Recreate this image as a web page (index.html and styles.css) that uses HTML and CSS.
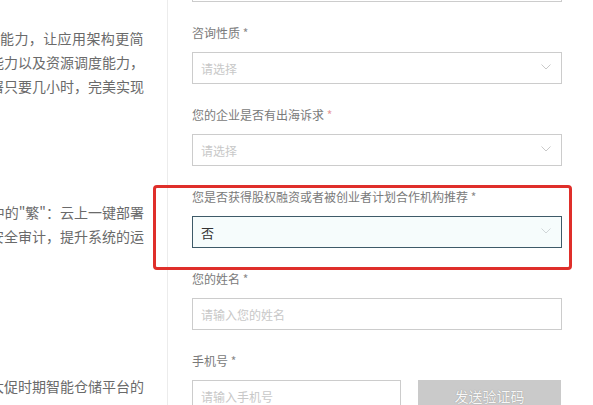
FILE: index.html
```html
<!DOCTYPE html>
<html lang="zh-CN">
<head>
<meta charset="utf-8">
<title>表单</title>
<link rel="stylesheet" href="styles.css">
</head>
<body>
<div class="page">
  <aside class="intro">
    <div class="block b1">
      <div class="line wide"><span>的能力，让应用架构更简</span></div>
      <div class="line"><span>调度能力以及资源调度能力，</span></div>
      <div class="line"><span>部署只要几小时，完美实现</span></div>
    </div>
    <div class="block b2">
      <div class="line"><span>杂中的"繁"：云上一键部署</span></div>
      <div class="line"><span>安全审计，提升系统的运</span></div>
    </div>
    <div class="block b3">
      <div class="line"><span>大促时期智能仓储平台的</span></div>
    </div>
  </aside>

  <main class="form">
    <div class="field first">
      <div class="control"></div>
    </div>

    <div class="field">
      <label class="label">咨询性质 <span class="req plain">*</span></label>
      <div class="control placeholder">
        <span>请选择</span>
        <svg class="chev" width="10" height="6" viewBox="0 0 10 6"><polyline points="0.5,0.5 5,5 9.5,0.5" fill="none" stroke="#c9c9c9" stroke-width="1"/></svg>
      </div>
    </div>

    <div class="field">
      <label class="label">您的企业是否有出海诉求 <span class="req">*</span></label>
      <div class="control placeholder">
        <span>请选择</span>
        <svg class="chev" width="10" height="6" viewBox="0 0 10 6"><polyline points="0.5,0.5 5,5 9.5,0.5" fill="none" stroke="#c9c9c9" stroke-width="1"/></svg>
      </div>
    </div>

    <div class="field marked">
      <label class="label">您是否获得股权融资或者被创业者计划合作机构推荐 <span class="req plain">*</span></label>
      <div class="control focused">
        <span>否</span>
        <svg class="chev" width="10" height="6" viewBox="0 0 10 6"><polyline points="0.5,0.5 5,5 9.5,0.5" fill="none" stroke="#d0d6d8" stroke-width="1"/></svg>
      </div>
      <div class="highlight"></div>
    </div>

    <div class="field">
      <label class="label">您的姓名 <span class="req plain">*</span></label>
      <div class="control placeholder"><span>请输入您的姓名</span></div>
    </div>

    <div class="field">
      <label class="label">手机号 <span class="req plain">*</span></label>
      <div class="phone-row">
        <div class="control placeholder phone"><span>请输入手机号</span></div>
        <button class="code-btn" type="button">发送验证码</button>
      </div>
    </div>
  </main>
</div>
</body>
</html>
```

FILE: styles.css
```css
* {
  box-sizing: border-box;
}

html, body {
  margin: 0;
  padding: 0;
  background: #ffffff;
}

body {
  font-family: "Noto Sans CJK SC", "Noto Sans", sans-serif;
  width: 593px;
  height: 405px;
  overflow: hidden;
}

.page {
  display: flex;
  height: 405px;
  overflow: hidden;
}

/* left column */
.intro {
  width: 168px;
  flex-shrink: 0;
  border-right: 1px solid #ececec;
  padding-top: 26px;
}

.block {
  width: 144px;
}

.b1 {
  margin-bottom: 102px;
}

.b2 {
  margin-bottom: 126px;
}

.line {
  display: flex;
  justify-content: flex-end;
  overflow: hidden;
  white-space: nowrap;
  height: 24px;
  line-height: 24px;
  font-size: 14px;
  color: #6a6a6a;
}

.line span {
  flex-shrink: 0;
}

.line.wide span {
  letter-spacing: 0.4px;
}

/* form column */
.form {
  padding-left: 24px;
  width: 394px;
  flex-shrink: 0;
}

.field {
  width: 370px;
  margin-bottom: 21px;
}

.field.first {
  margin-top: -30px;
}

.field.marked {
  position: relative;
}

.label {
  display: block;
  height: 20px;
  line-height: 20px;
  font-size: 12px;
  color: #7a7a7a;
  margin-bottom: 9px;
}

.req {
  color: #e89a9a;
}

.req.plain {
  color: #8a8a8a;
}

.control {
  height: 32px;
  border: 1px solid #cccccc;
  background: #ffffff;
  display: flex;
  align-items: center;
  justify-content: space-between;
  padding: 0 10px 0 8px;
  font-size: 12px;
}

.placeholder {
  color: #c8c8c8;
}

.focused {
  border-color: #3e5a68;
  background: #f6fcfc;
  color: #333333;
  font-size: 13px;
}

.chev {
  display: block;
  margin-top: -2px;
}

.highlight {
  position: absolute;
  top: -2px;
  left: -39px;
  right: -10px;
  bottom: -22px;
  border: 3px solid #df2f2a;
  border-radius: 4px;
  pointer-events: none;
}

.phone-row {
  display: flex;
  gap: 17px;
}

.phone {
  width: 209px;
}

.code-btn {
  width: 143px;
  height: 32px;
  border: none;
  background: #cacaca;
  color: #f7f7f7;
  font-family: "Noto Sans CJK SC", "Noto Sans", sans-serif;
  font-size: 14px;
  text-shadow: 0 0 1px rgba(0, 0, 0, 0.35);
  padding: 0;
}
```
